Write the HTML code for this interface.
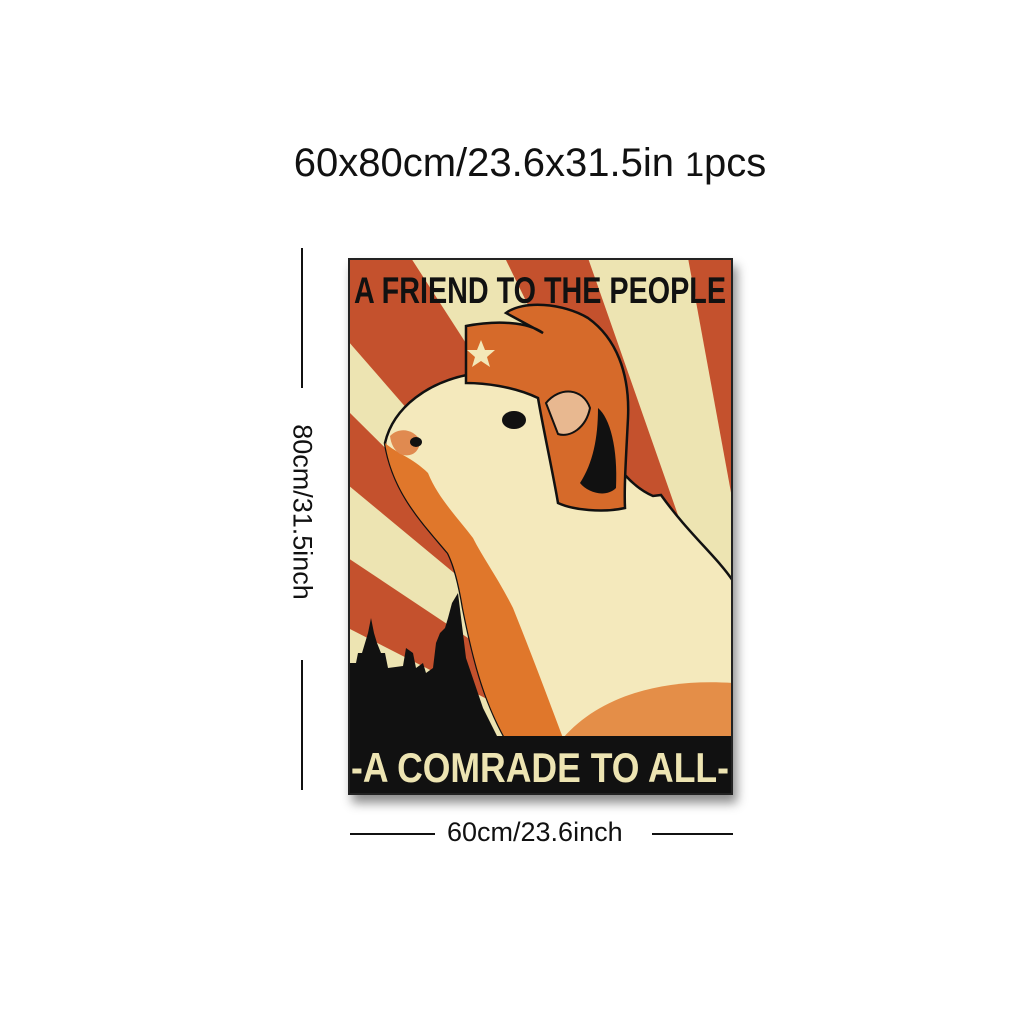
<!DOCTYPE html>
<html><head><meta charset="utf-8"><style>
html,body{margin:0;padding:0;background:#fff;}
body{width:1024px;height:1024px;position:relative;overflow:hidden;font-family:"Liberation Sans",sans-serif;}
.title{position:absolute;top:140px;left:0;width:1060px;text-align:center;font-size:40px;color:#111;line-height:46px;}
.ln{position:absolute;background:#111;}
.vt{position:absolute;left:302px;top:512px;transform:translate(-50%,-50%) rotate(90deg);font-size:27px;color:#111;white-space:nowrap;}
.ht{position:absolute;left:447px;top:817px;font-size:27px;color:#111;}
.poster{position:absolute;left:348px;top:258px;width:385px;height:537px;box-shadow:4px 8px 10px rgba(0,0,0,.45);}
</style></head><body>
<div class="title">60x80cm/23.6x31.5in <span style="font-size:34px">1</span>pcs</div>
<div class="ln" style="left:301px;top:248px;width:2px;height:140px"></div>
<div class="vt">80cm/31.5inch</div>
<div class="ln" style="left:301px;top:660px;width:2px;height:130px"></div>
<div class="ln" style="left:350px;top:833px;width:85px;height:2px"></div>
<div class="ht">60cm/23.6inch</div>
<div class="ln" style="left:652px;top:833px;width:81px;height:2px"></div>
<div class="poster">
<svg width="385" height="537" viewBox="0 0 385 537">
<rect width="385" height="537" fill="#c4512d"/>
<g fill="#ede4b2">
<polygon points="450,600 63,0 157,0"/>
<polygon points="450,600 240,0 340,0"/>
<polygon points="450,600 0,83 0,153"/>
<polygon points="450,600 0,227 0,300"/>
<polygon points="450,600 0,370 0,430"/>
</g>
<path d="M37,185 C45,150 80,122 130,115 C170,110 200,118 215,135 L240,150 C255,190 275,225 305,238 L313,237 C340,275 370,300 385,323 L385,480 L157,480 C135,440 125,400 115,350 C110,320 105,305 100,295 C75,265 45,235 37,185 Z" fill="#f4e9bc" stroke="#111" stroke-width="2.5"/>
<path d="M37,185 C45,235 75,265 100,295 C105,305 110,320 115,350 C125,400 135,440 157,480 L215,480 C200,440 185,400 165,350 C150,320 135,300 125,280 C110,260 90,240 80,215 C65,200 48,195 37,185 Z" fill="#e0772b"/>
<path d="M42,178 C52,168 66,172 72,182 C72,195 62,200 52,196 C46,192 43,186 42,178 Z" fill="#e08a50"/>
<path d="M215,480 C250,440 310,420 385,425 L385,480 Z" fill="#e0772b" opacity=".8"/>
<path d="M118,68 C150,62 180,64 195,75 L158,55 C175,42 215,45 240,60 C268,80 282,115 280,160 C278,200 276,230 277,250 C255,255 225,252 210,245 C205,215 195,170 190,140 C165,128 135,125 118,125 Z" fill="#d66a2a" stroke="#111" stroke-width="2.5"/>
<path d="M250,150 C262,160 270,190 268,230 C258,240 240,235 232,225 C245,205 250,180 250,150 Z" fill="#111"/>
<polygon points="133,82 137,92 147,92 139,99 142,109 133,103 124,109 127,99 119,92 129,92" fill="#f3e8b8"/>
<path d="M198,145 C212,128 235,130 242,150 C238,170 222,180 210,176 Z" fill="#e8b890" stroke="#111" stroke-width="2"/>
<ellipse cx="166" cy="162" rx="12" ry="9" fill="#111"/>
<ellipse cx="68" cy="184" rx="6" ry="5" fill="#111"/>
<path d="M0,480 L0,405 L8,405 L10,395 L14,395 L17,385 L20,375 L23,360 L26,375 L29,385 L33,395 L37,395 L40,410 L55,408 L58,390 L65,395 L68,410 L75,405 L78,415 L85,410 L88,385 L92,375 L97,370 L100,360 L104,345 L110,335 L118,400 L135,450 L150,480 Z" fill="#111"/>
<rect x="0" y="478" width="385" height="59" fill="#111"/>
<rect x="1" y="1" width="383" height="535" fill="none" stroke="#222" stroke-width="2"/>
<text x="192" y="45" text-anchor="middle" font-family="Liberation Sans Narrow, Liberation Sans, sans-serif" font-weight="bold" font-size="37" fill="#111" textLength="372" lengthAdjust="spacingAndGlyphs">A FRIEND TO THE PEOPLE</text>
<text x="192" y="524" text-anchor="middle" font-family="Liberation Sans Narrow, Liberation Sans, sans-serif" font-weight="bold" font-size="42" fill="#ede4b2" textLength="378" lengthAdjust="spacingAndGlyphs">-A COMRADE TO ALL-</text>
</svg>
</div>
</body></html>
